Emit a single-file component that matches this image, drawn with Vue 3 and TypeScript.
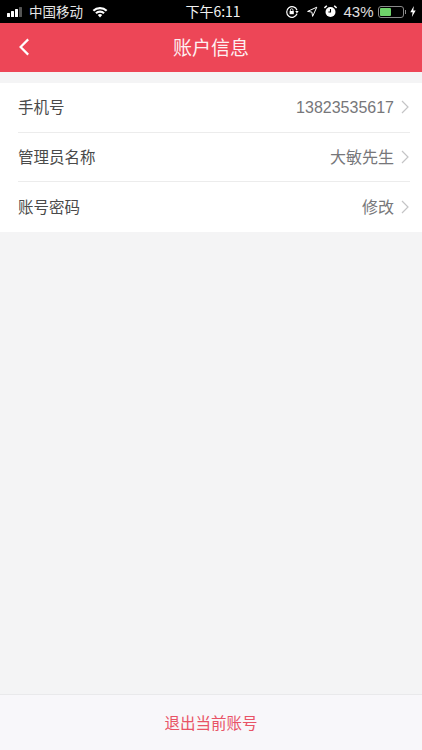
<script setup lang="ts">
const rows = [
  { label: '手机号', value: '13823535617' },
  { label: '管理员名称', value: '大敏先生' },
  { label: '账号密码', value: '修改' },
]
</script>

<template>
  <div class="page">
    <div class="status">
      <div class="status-left">
        <span class="signal"><i class="b1"></i><i class="b2"></i><i class="b3"></i><i class="b4"></i></span>
        <span class="carrier">中国移动</span>
        <svg class="wifi" width="16" height="12" viewBox="0 0 16 12">
          <path d="M0.6 4 A10.5 10.5 0 0 1 15.4 4 L13.9 5.6 A8.4 8.4 0 0 0 2.1 5.6 Z" fill="#fff" />
          <path d="M3.2 6.6 A6.8 6.8 0 0 1 12.8 6.6 L11.3 8.1 A4.7 4.7 0 0 0 4.7 8.1 Z" fill="#fff" />
          <path d="M5.8 9.1 A3.1 3.1 0 0 1 10.2 9.1 L8 11.4 Z" fill="#fff" />
        </svg>
      </div>
      <div class="clock">下午6:11</div>
      <div class="status-right">
        <svg class="ic-lock" width="14" height="14" viewBox="0 0 14 14">
          <path d="M12 5.2 A5.3 5.3 0 1 0 12 8.8" fill="none" stroke="#fff" stroke-width="1.2" />
          <path d="M10.2 6 L13.6 6 L12 8.6 Z" fill="#fff" />
          <rect x="4.6" y="6" width="4.2" height="3.2" fill="#fff" />
          <path d="M5.4 6 V5 A1.3 1.3 0 0 1 8 5 V6" fill="none" stroke="#fff" stroke-width="0.8" />
        </svg>
        <svg class="ic-loc" width="12" height="12" viewBox="0 0 12 12">
          <path d="M10.8 1.2 L1.6 5.4 L5.9 6.1 L6.6 10.4 Z" fill="none" stroke="#fff" stroke-width="1" stroke-linejoin="round" />
        </svg>
        <svg class="ic-alarm" width="13" height="13" viewBox="0 0 13 13">
          <circle cx="6.5" cy="7" r="5" fill="#fff" />
          <path d="M6.5 4 V7 H4.4" fill="none" stroke="#000" stroke-width="1.1" />
          <path d="M0.4 3 L2.8 0.7 M12.6 3 L10.2 0.7" stroke="#fff" stroke-width="1.5" />
        </svg>
        <span class="pct">43%</span>
        <span class="battery"><span class="level"></span></span>
        <span class="nub"></span>
        <svg class="bolt" width="6" height="11" viewBox="0 0 6 11">
          <path d="M3.8 0 L0.3 6.2 H2.6 L1.9 11 L5.7 4.4 H3.3 Z" fill="#fff" />
        </svg>
      </div>
    </div>

    <header class="header">
      <svg class="back" width="12" height="18" viewBox="0 0 12 18">
        <path d="M10.2 1.4 L2.6 9 L10.2 16.6" fill="none" stroke="#fff" stroke-width="2.2" />
      </svg>
      <h1 class="title">账户信息</h1>
    </header>

    <section class="list">
      <div v-for="row in rows" :key="row.label" class="row">
        <span class="label">{{ row.label }}</span>
        <span class="value">{{ row.value }}</span>
        <svg class="chev" width="8" height="14" viewBox="0 0 8 14">
          <path d="M1 1 L7 7 L1 13" fill="none" stroke="#c4c4c6" stroke-width="1.2" />
        </svg>
      </div>
    </section>

    <main class="spacer"></main>

    <footer class="footer">退出当前账号</footer>
  </div>
</template>

<style>
html, body { margin: 0; padding: 0; }
</style>

<style scoped>
.page {
  width: 422px;
  height: 750px;
  display: flex;
  flex-direction: column;
  background: #f4f4f5;
  overflow: hidden;
  font-family: "Noto Sans CJK SC", "Liberation Sans", sans-serif;
}
.status {
  height: 23px;
  flex: none;
  background: #000;
  color: #fff;
  display: grid;
  grid-template-columns: 1fr auto 1fr;
  align-items: center;
  font-size: 14px;
  line-height: 23px;
}
.status-left {
  display: flex;
  align-items: center;
  padding-left: 7px;
}
.signal { display: flex; align-items: flex-end; gap: 1px; height: 10px; }
.signal i { display: block; width: 3px; background: #fff; border-radius: 0.5px; }
.b1 { height: 4px; }
.b2 { height: 6px; }
.b3 { height: 8px; }
.b4 { height: 10px; background: #555 !important; }
.carrier { margin-left: 7px; color: #e6e6e6; font-size: 13.5px; }
.wifi { margin-left: 9px; }
.clock { font-size: 14px; color: #f2f2f2; padding-left: 4px; }
.status-right {
  display: flex;
  align-items: center;
  justify-content: flex-end;
  padding-right: 6px;
}
.ic-loc { margin-left: 7px; }
.ic-alarm { margin-left: 6px; }
.pct {
  margin-left: 6px;
  font-family: "Liberation Sans", sans-serif;
  font-size: 15px;
  color: #e0e0e0;
}
.battery {
  margin-left: 4px;
  width: 26px;
  height: 12px;
  box-sizing: border-box;
  border: 1px solid #8a8a8a;
  border-radius: 3px;
  padding: 1px;
  display: flex;
}
.level { width: 11px; background: #6fd46a; border-radius: 1px; }
.nub { width: 1.5px; height: 4px; background: #8a8a8a; margin-left: 1px; }
.bolt { margin-left: 4px; }

.header {
  height: 49px;
  flex: none;
  box-sizing: border-box;
  padding-bottom: 3px;
  background: #ed4657;
  position: relative;
  display: flex;
  align-items: center;
  justify-content: center;
}
.back { position: absolute; left: 18px; top: 15px; }
.title {
  margin: 0;
  font-size: 19px;
  font-weight: 400;
  color: #fdf0f1;
}
.list {
  margin-top: 11px;
  background: #fff;
  padding: 0 12px 0 18px;
  flex: none;
}
.row {
  height: 49.5px;
  box-sizing: border-box;
  display: flex;
  align-items: center;
  border-bottom: 1px solid #ececec;
}
.row:last-child { border-bottom: none; }
.label { flex: 1; font-size: 15.5px; color: #4a4a4a; line-height: 24px; padding-bottom: 2px; }
.value {
  font-size: 16px;
  color: #77777a;
  line-height: 24px;
  padding-top: 2px;
  font-family: "Liberation Sans", "Noto Sans CJK SC", sans-serif;
}
.chev { margin: 0 1px 0 7px; }
.spacer { flex: 1; }
.footer {
  height: 56px;
  flex: none;
  box-sizing: border-box;
  padding-bottom: 2px;
  border-top: 1px solid #e9e9eb;
  background: #f8f7fa;
  color: #e85366;
  font-size: 15.5px;
  display: flex;
  align-items: center;
  justify-content: center;
}
</style>
